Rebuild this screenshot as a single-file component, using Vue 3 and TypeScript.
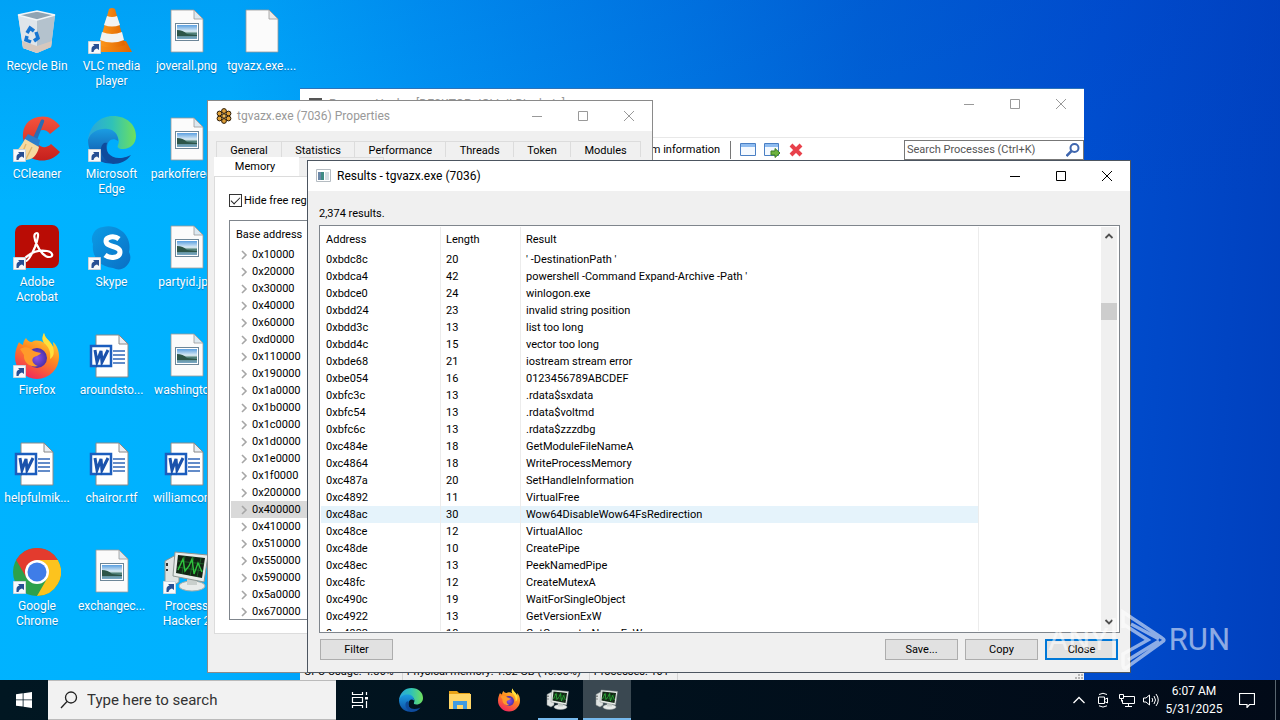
<script setup lang="ts">
import { ref } from 'vue'

interface DesktopItem {
  icon: string
  lines: string[]
  col: number
  row: number
  shortcut?: boolean
}

interface ResultRow {
  address: string
  length: number
  text: string
}

const desktopItems: DesktopItem[] = [
  { icon: 'bin', lines: ['Recycle Bin'], col: 1, row: 1 },
  { icon: 'ccleaner', lines: ['CCleaner'], col: 1, row: 2, shortcut: true },
  { icon: 'acrobat', lines: ['Adobe', 'Acrobat'], col: 1, row: 3, shortcut: true },
  { icon: 'firefox', lines: ['Firefox'], col: 1, row: 4, shortcut: true },
  { icon: 'word', lines: ['helpfulmik...'], col: 1, row: 5 },
  { icon: 'chrome', lines: ['Google', 'Chrome'], col: 1, row: 6, shortcut: true },
  { icon: 'vlc', lines: ['VLC media', 'player'], col: 2, row: 1, shortcut: true },
  { icon: 'edge', lines: ['Microsoft', 'Edge'], col: 2, row: 2, shortcut: true },
  { icon: 'skype', lines: ['Skype'], col: 2, row: 3, shortcut: true },
  { icon: 'word', lines: ['aroundsto...'], col: 2, row: 4 },
  { icon: 'word', lines: ['chairor.rtf'], col: 2, row: 5 },
  { icon: 'image', lines: ['exchangec...'], col: 2, row: 6 },
  { icon: 'image', lines: ['joverall.png'], col: 3, row: 1 },
  { icon: 'image', lines: ['parkoffered...'], col: 3, row: 2 },
  { icon: 'image', lines: ['partyid.jpg'], col: 3, row: 3 },
  { icon: 'image', lines: ['washingto...'], col: 3, row: 4 },
  { icon: 'word', lines: ['williamcon...'], col: 3, row: 5 },
  { icon: 'hacker', lines: ['Process', 'Hacker 2'], col: 3, row: 6, shortcut: true },
  { icon: 'blank', lines: ['tgvazx.exe....'], col: 4, row: 1 },
]

const tabs = ['General', 'Statistics', 'Performance', 'Threads', 'Token', 'Modules']

const baseAddresses = [
  '0x10000', '0x20000', '0x30000', '0x40000', '0x60000', '0xd0000', '0x110000', '0x190000',
  '0x1a0000', '0x1b0000', '0x1c0000', '0x1d0000', '0x1e0000', '0x1f0000', '0x200000',
  '0x400000', '0x410000', '0x510000', '0x550000', '0x590000', '0x5a0000', '0x670000',
]

const results: ResultRow[] = [
  { address: '0xbdc8c', length: 20, text: "' -DestinationPath '" },
  { address: '0xbdca4', length: 42, text: "powershell -Command Expand-Archive -Path '" },
  { address: '0xbdce0', length: 24, text: 'winlogon.exe' },
  { address: '0xbdd24', length: 23, text: 'invalid string position' },
  { address: '0xbdd3c', length: 13, text: 'list too long' },
  { address: '0xbdd4c', length: 15, text: 'vector too long' },
  { address: '0xbde68', length: 21, text: 'iostream stream error' },
  { address: '0xbe054', length: 16, text: '0123456789ABCDEF' },
  { address: '0xbfc3c', length: 13, text: '.rdata$sxdata' },
  { address: '0xbfc54', length: 13, text: '.rdata$voltmd' },
  { address: '0xbfc6c', length: 13, text: '.rdata$zzzdbg' },
  { address: '0xc484e', length: 18, text: 'GetModuleFileNameA' },
  { address: '0xc4864', length: 18, text: 'WriteProcessMemory' },
  { address: '0xc487a', length: 20, text: 'SetHandleInformation' },
  { address: '0xc4892', length: 11, text: 'VirtualFree' },
  { address: '0xc48ac', length: 30, text: 'Wow64DisableWow64FsRedirection' },
  { address: '0xc48ce', length: 12, text: 'VirtualAlloc' },
  { address: '0xc48de', length: 10, text: 'CreatePipe' },
  { address: '0xc48ec', length: 13, text: 'PeekNamedPipe' },
  { address: '0xc48fc', length: 12, text: 'CreateMutexA' },
  { address: '0xc490c', length: 19, text: 'WaitForSingleObject' },
  { address: '0xc4922', length: 13, text: 'GetVersionExW' },
  { address: '0xc4932', length: 18, text: 'GetComputerNameExW' },
]

const hovered = ref('0xc48ac')
const hideFree = ref(true)
const processQuery = ref('')
const startQuery = ref('')
</script>

<template>
  <div class="screen">
    <svg class="defs" width="0" height="0" aria-hidden="true">
      <defs>
        <linearGradient id="g-edge-a" x1="0" y1="0" x2="1" y2="0"><stop offset="0" stop-color="#2aa5dd" /><stop offset=".5" stop-color="#2fc2b8" /><stop offset="1" stop-color="#6fe05c" /></linearGradient>
        <linearGradient id="g-edge-b" x1="0" y1="0" x2="0" y2="1"><stop offset="0" stop-color="#1b9de2" /><stop offset="1" stop-color="#0d4da3" /></linearGradient>
        <linearGradient id="g-fox" x1=".8" y1="0" x2=".3" y2="1"><stop offset="0" stop-color="#ffe03c" /><stop offset=".45" stop-color="#ff8a1f" /><stop offset="1" stop-color="#f2255d" /></linearGradient>
        <radialGradient id="g-globe"><stop offset="0" stop-color="#8a52e8" /><stop offset="1" stop-color="#4b30a8" /></radialGradient>
        <linearGradient id="g-cone" x1="0" y1="0" x2="1" y2="0"><stop offset="0" stop-color="#ff9a1c" /><stop offset="1" stop-color="#e06500" /></linearGradient>
        <linearGradient id="g-cc" x1="0" y1="0" x2="0" y2="1"><stop offset="0" stop-color="#f5533d" /><stop offset="1" stop-color="#c6201d" /></linearGradient>
        <linearGradient id="g-sky" x1="0" y1="0" x2="0" y2="1"><stop offset="0" stop-color="#5a9fe0" /><stop offset=".45" stop-color="#dcecf5" /><stop offset=".6" stop-color="#4f8076" /><stop offset="1" stop-color="#7ba9c8" /></linearGradient>
        <linearGradient id="g-skype" x1="0" y1="0" x2="1" y2="1"><stop offset="0" stop-color="#0b9ce6" /><stop offset="1" stop-color="#0a6fc4" /></linearGradient>
      </defs>
      <symbol id="i-bin" viewBox="0 0 48 48">
        <path d="M5 7 24 3l18 4-4 32-14 6-14-5z" fill="#d4dce2" />
        <path d="m5 7 19 5v33l-14-5z" fill="#dfe5ea" /><path d="m24 12 18-5-4 32-14 6z" fill="#b4c2cd" />
        <path d="m5 7 19-4 18 4-18 5z" fill="#8fa4b3" stroke="#f2f6f8" stroke-width="1.4" />
        <path d="m9 33 15 5 15-5-1 6-14 6-14-5z" fill="#d6c8be" />
        <path d="m14 25 3-5 4 3M23 24l2 6-4 3M18 34l-5-2 1-4" fill="none" stroke="#1676d2" stroke-width="3.500" />
      </symbol>
      <symbol id="i-ccleaner" viewBox="0 0 48 48">
        <path d="M47 10C41 2 33-1 25 1 14 3 9 12 10 22l4 16c5 8 24 10 33-2l-9-8c-4 4-9 4-12 1-5-4-4-11 0-14 4-2 8-1 11 3z" fill="url(#g-cc)" />
        <path d="M28 4c2-1 4 0 3 2l-7 18-4-2z" fill="#2b6db4" /><path d="m15 18 12 6-2 9-15-8z" fill="#2d7dcb" />
        <path d="m12 23 14 8c-2 9-7 13-14 13L1 37c4-3 8-8 11-14z" fill="#f6d9a0" />
        <path d="m13 28-5 12M19 31l-6 12" stroke="#e0b56c" stroke-width="1.4" />
      </symbol>
      <symbol id="i-acrobat" viewBox="0 0 48 48">
        <rect x="2" y="1" width="44" height="43" rx="7" fill="#b90c05" />
        <path d="M24 9c-4 0-3 6 0 12 3 7 8 12 12 12 5 0 4-5-2-6-7-1-14 1-18 4-5 3-6 5-4 6 3 1 7-7 10-14 3-8 4-14 2-14z" fill="none" stroke="#fff" stroke-width="2.2" />
      </symbol>
      <symbol id="i-firefox" viewBox="0 0 48 48">
        <path d="M31 1c-2 4-2 7 0 10-4-3-9-3-12-1-3 0-5-2-6-4-2 2-3 5-3 7-3-1-4-3-4-3-2 4-4 9-4 15a22 22 0 0 0 44 0c0-6-2-12-6-15 0 2 1 4 0 5-2-6-8-8-9-14z" fill="url(#g-fox)" />
        <circle cx="24" cy="26" r="10" fill="url(#g-globe)" />
        <path d="M7 17c5-3 9-2 12 1 3 2 6 2 9 3-2 3-6 3-8 5-2 3 1 7 5 8-8 2-15-4-14-11z" fill="#ff9a2a" />
        <path d="M31 1c-2 4-2 7 0 10 5 4 7 9 6 16 3-2 5-5 3-12-2-6-8-8-9-14z" fill="#ffe03c" />
      </symbol>
      <symbol id="i-word" viewBox="0 0 48 48">
        <path d="M8 3h23l9 9v33H8z" fill="#fff" stroke="#8a8a8a" /><path d="M31 3v9h9z" fill="#e9edf2" stroke="#8a8a8a" />
        <path d="M25 19h12M25 23h12M25 27h12M25 31h12" stroke="#3067b8" stroke-width="1.3" />
        <rect x="3" y="14" width="20" height="20" fill="#fff" stroke="#1b5dbe" stroke-width="2.500" />
        <path d="m7 18 2 12 4-11 1 11 6-12" fill="none" stroke="#1b52ac" stroke-width="3" />
      </symbol>
      <symbol id="i-chrome" viewBox="0 0 48 48">
        <circle cx="24" cy="24" r="24" fill="#2da14c" />
        <path d="M3.200 12A24 24 0 0 1 44.800 12H24L13.600 30z" fill="#e33b2e" />
        <path d="M44.800 12A24 24 0 0 1 24 48L34.400 30 24 12z" fill="#fcc31e" />
        <circle cx="24" cy="24" r="12" fill="#fff" /><circle cx="24" cy="24" r="9.500" fill="#3f7de8" />
      </symbol>
      <symbol id="i-vlc" viewBox="0 0 48 48">
        <path d="M11 33h27l6 11H4z" fill="url(#g-cone)" />
        <path d="M21 1q3-2 6 0l10 36q-13 5-26 0z" fill="url(#g-cone)" />
        <path d="m19 8-3 9q8 3 16 0l-3-9q-5 2-10 0z" fill="#f2f2f2" /><path d="m14 24-2 8q12 5 24 0l-2-8q-10 4-20 0z" fill="#f2f2f2" />
      </symbol>
      <symbol id="i-edge" viewBox="0 0 48 48">
        <path d="M0 24C2 9 12 0 25 0c14 0 23 9 23 20 0 8-6 13-13 13-5 0-6-2-5-4 3-6-2-12-9-12C12 17 3 20 0 24z" fill="url(#g-edge-a)" />
        <path d="M0 24c3-9 12-12 20-11 7 1 11 7 10 12-5-4-11-1-11 7 0 7 4 12 8 15C11 50 0 38 0 24z" fill="url(#g-edge-b)" />
        <path d="M19 27c-3 8 3 15 12 15 6 0 9-2 12-3-4 6-11 9-18 9-8-2-13-10-12-16 1-4 3-6 6-5z" fill="#0f4b9c" />
      </symbol>
      <symbol id="i-skype" viewBox="0 0 48 48">
        <path d="M15 3a21 21 0 0 1 26 25 12 12 0 0 1-16 16A21 21 0 0 1 5 20 12 12 0 0 1 15 3z" fill="url(#g-skype)" />
        <path d="M31 15c-5-4-13-2-13 2 0 7 14 4 14 11 0 6-10 7-15 3" fill="none" stroke="#fff" stroke-width="5" />
      </symbol>
      <symbol id="i-image" viewBox="0 0 48 48">
        <path d="M8 2h23l9 9v33H8z" fill="#fbfbfb" stroke="#9a9a9a" stroke-width=".8" /><path d="M31 2v9h9z" fill="#dce8f0" stroke="#9a9a9a" stroke-width=".8" />
        <rect x="12.500" y="15.500" width="23" height="17" fill="#fff" stroke="#6d8698" /><path d="M14 17h20v14H14z" fill="url(#g-sky)" /><path d="M14 22q6 0 10 4l10 1v1H14z" fill="#2d5548" />
      </symbol>
      <symbol id="i-blank" viewBox="0 0 48 48">
        <path d="M8 2h23l9 9v33H8z" fill="#fbfbfb" stroke="#9a9a9a" stroke-width=".8" /><path d="M31 2v9h9z" fill="#e9e9e9" stroke="#9a9a9a" stroke-width=".8" />
      </symbol>
      <symbol id="i-hacker" viewBox="0 0 48 48">
        <path d="m2 13 9-5 5 3v23l-6 4-8-4z" fill="#dfe3e2" stroke="#8a9390" /><path d="M4 15v3M4 21v2" stroke="#333" stroke-width="2" />
        <ellipse cx="29" cy="38" rx="13" ry="5" fill="#e8ebea" stroke="#a5aeab" /><path d="M24 30h10v7H24z" fill="#c9cfcc" />
        <path d="m12 4 33 3-4 27-31-6z" fill="#e9edeb" stroke="#8d9592" /><path d="m15 7 27 3-3 20-26-5z" fill="#122414" />
        <path d="m15 13 26 3M14 19l26 4M22 8l-3 18M31 9l-4 19M38 10l-4 19" stroke="#1e6e2c" stroke-width=".8" />
        <path d="m15 22 5-11 2 12 4-5 3-7 2 15 4-11 4 9" fill="none" stroke="#2fc43e" stroke-width="1.400" />
      </symbol>
      <symbol id="i-shortcut" viewBox="0 0 14 14">
        <path d="M.5.5h12v12H.5z" fill="#f7f9fb" stroke="#c9d4dc" /><path d="M3.500 11V8q0-3 3-3.500L5 3h6v6L9 7.500Q6 8 5.500 11z" fill="#274f93" />
      </symbol>
      <symbol id="i-min" viewBox="0 0 12 12"><path d="M1 6.500h10" stroke="currentColor" /></symbol>
      <symbol id="i-max" viewBox="0 0 12 12"><path d="M1.500 1.500h9v9h-9z" fill="none" stroke="currentColor" /></symbol>
      <symbol id="i-close" viewBox="0 0 12 12"><path d="m1 1 10 10M11 1 1 11" stroke="currentColor" /></symbol>
      <symbol id="i-chev" viewBox="0 0 8 10"><path d="m2 1 4 4-4 4" fill="none" stroke="#a6a6a6" stroke-width="1.600" /></symbol>
      <symbol id="i-up" viewBox="0 0 10 8"><path d="m1.500 6 3.500-3.500L8.500 6" fill="none" stroke="#505050" stroke-width="1.800" /></symbol>
      <symbol id="i-app" viewBox="0 0 16 16">
        <path d="M.5 1.500h14v12H.5z" fill="#fff" stroke="#b5bcc2" /><path d="M2 4h6v8H2z" fill="#3f8a84" /><path d="M9 4h4v8H9z" fill="#d5dde3" /><path d="M2 4h3v8H2z" fill="#6b87a8" />
      </symbol>
    </svg>

    <main class="desktop">
      <ul class="icons">
        <li v-for="item in desktopItems" :key="item.lines[0]" :style="{ gridColumn: item.col, gridRow: item.row }">
          <span class="pic">
            <svg class="big"><use :href="'#i-' + item.icon" /></svg>
            <svg v-if="item.shortcut" class="arrow"><use href="#i-shortcut" /></svg>
          </span>
          <span v-for="line in item.lines" :key="line" class="label">{{ line }}</span>
        </li>
      </ul>

      <section class="window hacker">
        <header class="titlebar muted">
          <svg class="ticon"><rect x="1" y="2" width="13" height="12" fill="#555" /><rect x="4" y="4" width="9" height="7" fill="#163a1a" /></svg>
          <h2>Process Hacker [DESKTOP-JGLLJLD\admin]</h2>
          <div class="controls">
            <button type="button" aria-label="Minimize"><svg><use href="#i-min" /></svg></button>
            <button type="button" aria-label="Maximize"><svg><use href="#i-max" /></svg></button>
            <button type="button" aria-label="Close"><svg><use href="#i-close" /></svg></button>
          </div>
        </header>
        <div class="toolbar">
          <button type="button" class="sysinfo">System information</button>
          <span class="sep"></span>
          <button type="button" aria-label="Find window">
            <svg viewBox="0 0 16 16"><path d="M.5 1.500h15v12H.5z" fill="#f4f9ff" stroke="#4a7fc4" /><path d="M1 2h14v3H1z" fill="#8fbcf0" /></svg>
          </button>
          <button type="button" aria-label="Find window and thread">
            <svg viewBox="0 0 16 16"><path d="M.5 1.500h14v12H.5z" fill="#f4f9ff" stroke="#4a7fc4" /><path d="M1 2h13v3H1z" fill="#8fbcf0" /><path d="M7 9h4V6.500l5 4.500-5 4.500V13H7z" fill="#6db33f" stroke="#3f7d22" /></svg>
          </button>
          <button type="button" aria-label="Close window">
            <svg viewBox="0 0 16 16"><path d="m3 3 10 10M13 3 3 13" stroke="#e8414b" stroke-width="4" /></svg>
          </button>
          <label class="search">
            <input v-model="processQuery" type="text" placeholder="Search Processes (Ctrl+K)" aria-label="Search Processes" />
            <svg viewBox="0 0 14 14"><circle cx="8.500" cy="5" r="4" fill="none" stroke="#3f66ae" stroke-width="2" /><path d="m5.500 8-5 5" stroke="#3f66ae" stroke-width="2.500" /></svg>
          </label>
        </div>
        <footer class="status">
          <span>CPU Usage: 4.86%</span>
          <span>Physical memory: 1.82 GB (46.08%)</span>
          <span>Processes: 101</span>
          <svg class="grip" viewBox="0 0 10 10"><path d="M7 1h2v2H7zM4 4h2v2H4zM7 4h2v2H7zM1 7h2v2H1zM4 7h2v2H4zM7 7h2v2H7z" fill="#b5b5b5" /></svg>
        </footer>
      </section>

      <section class="window props">
        <header class="titlebar muted">
          <svg class="ticon" viewBox="0 0 16 16">
            <g fill="#e0a038" stroke="#2a1a05"><circle cx="8" cy="3" r="2.400" /><circle cx="12.500" cy="5.500" r="2.400" /><circle cx="12.500" cy="10.500" r="2.400" /><circle cx="8" cy="13" r="2.400" /><circle cx="3.500" cy="10.500" r="2.400" /><circle cx="3.500" cy="5.500" r="2.400" /><circle cx="8" cy="8" r="2.200" fill="#f0bd58" /></g>
          </svg>
          <h2>tgvazx.exe (7036) Properties</h2>
          <div class="controls">
            <button type="button" aria-label="Minimize"><svg><use href="#i-min" /></svg></button>
            <button type="button" aria-label="Maximize"><svg><use href="#i-max" /></svg></button>
            <button type="button" aria-label="Close"><svg><use href="#i-close" /></svg></button>
          </div>
        </header>
        <div class="tabs" role="tablist">
          <button v-for="tab in tabs" :key="tab" type="button" role="tab">{{ tab }}</button>
        </div>
        <div class="tabs second">
          <button type="button" role="tab" class="current" aria-selected="true">Memory</button>
          <button type="button" role="tab" aria-label="Environment"></button>
        </div>
        <div class="page">
          <label class="check"><input v-model="hideFree" type="checkbox" /><span>Hide free regions</span></label>
          <div class="tree">
            <div class="tree-head">Base address</div>
            <ul>
              <li v-for="addr in baseAddresses" :key="addr" :class="{ picked: addr === '0x400000' }">
                <svg><use href="#i-chev" /></svg>{{ addr }}
              </li>
            </ul>
          </div>
        </div>
      </section>

      <section class="window results">
        <header class="titlebar">
          <svg class="ticon"><use href="#i-app" /></svg>
          <h2>Results - tgvazx.exe (7036)</h2>
          <div class="controls">
            <button type="button" aria-label="Minimize"><svg><use href="#i-min" /></svg></button>
            <button type="button" aria-label="Maximize"><svg><use href="#i-max" /></svg></button>
            <button type="button" aria-label="Close"><svg><use href="#i-close" /></svg></button>
          </div>
        </header>
        <div class="content">
          <p>2,374 results.</p>
          <div class="list">
            <div class="scroller">
              <table>
                <colgroup><col class="c1" /><col class="c2" /><col class="c3" /></colgroup>
                <thead>
                  <tr><th>Address</th><th>Length</th><th>Result</th></tr>
                </thead>
                <tbody>
                  <tr v-for="row in results" :key="row.address" :class="{ hot: hovered === row.address }" @mouseenter="hovered = row.address">
                    <td>{{ row.address }}</td><td>{{ row.length }}</td><td>{{ row.text }}</td>
                  </tr>
                </tbody>
              </table>
              <div class="gridlines"><i class="c1"></i><i class="c2"></i><i class="c3"></i></div>
            </div>
            <div class="bar">
              <svg><use href="#i-up" /></svg>
              <span class="thumb"></span>
              <svg class="down"><use href="#i-up" /></svg>
            </div>
          </div>
          <div class="actions">
            <button type="button" class="filter">Filter</button>
            <button type="button">Save...</button>
            <button type="button">Copy</button>
            <button type="button" class="default">Close</button>
          </div>
        </div>
      </section>

      <div class="mark">
        <span>ANY</span>
        <svg viewBox="0 0 56 64"><path d="M3 10v40M12 20V4l39 26q4 2 0 4L15 60q-3 1-3-3V46l25-14L12 16M17 52l31-19M20 16l28 15" fill="none" stroke="currentColor" stroke-width="3.500" /></svg>
        <span>RUN</span>
      </div>
    </main>

    <footer class="taskbar">
      <button type="button" class="start" aria-label="Start">
        <svg viewBox="0 0 16 16"><path d="m0 2.200 6.700-.9v6.200H0zM7.500 1.200 16 0v7.500H7.500zM0 8.300h6.700v6.300L0 13.700zM7.500 8.300H16V16l-8.500-1.200z" fill="#fff" /></svg>
      </button>
      <label class="find">
        <svg viewBox="0 0 18 18"><circle cx="11" cy="6.500" r="5.500" fill="none" stroke="#222" stroke-width="1.300" /><path d="m7 10.500-6 6.500" stroke="#222" stroke-width="1.300" /></svg>
        <input v-model="startQuery" type="text" placeholder="Type here to search" aria-label="Type here to search" />
      </label>
      <button type="button" class="app" aria-label="Task View">
        <svg class="s18" viewBox="0 0 18 18"><path d="M1.500 1v2.500h10V1M1.500 17v-2.500h10V17M1.500 6.500h10v5h-10zM15.500 1v3M15.500 10v7" fill="none" stroke="#fff" stroke-width="1.200" /><path d="M14 6h3v2.500h-3z" fill="#fff" /></svg>
      </button>
      <span class="pinned">
        <button type="button" class="app" aria-label="Microsoft Edge"><svg class="s24"><use href="#i-edge" /></svg></button>
        <button type="button" class="app" aria-label="File Explorer">
          <svg class="s24" viewBox="0 0 24 24"><path d="M1 3h8l2 2h11v4H1z" fill="#e8a317" /><path d="M1 6h22v15H1z" fill="#ffd667" /><path d="M5 21v-8h14v8h-4v-4H9v4z" fill="#3f9be0" /></svg>
        </button>
        <button type="button" class="app" aria-label="Firefox"><svg class="s24"><use href="#i-firefox" /></svg></button>
      </span>
      <button type="button" class="app running" aria-label="Process Hacker"><svg class="s24"><use href="#i-hacker" /></svg></button>
      <button type="button" class="app running active" aria-label="Results"><svg class="s24"><use href="#i-hacker" /></svg></button>
      <div class="tray">
        <button type="button" aria-label="Show hidden icons"><svg viewBox="0 0 16 16"><path d="m2.500 11 5.500-5.500 5.500 5.500" fill="none" stroke="#fff" stroke-width="1.300" /></svg></button>
        <button type="button" aria-label="Meet Now"><svg viewBox="0 0 16 16"><path d="M3.500 5h6v6.500h-6zM9.500 7.500l3-1.500v5l-3-1.500M4 2.500q4-2.500 8 0M4 13.800q4 2.500 8 0" fill="none" stroke="#fff" /></svg></button>
        <button type="button" aria-label="Network"><svg viewBox="0 0 16 16"><path d="M5 4.500h10.500v7H3.500V8M9.500 11.500v3M6 14.500h7M.5 2.500h4v4h-4zM2.500 6.500v3" fill="none" stroke="#fff" /></svg></button>
        <button type="button" aria-label="Volume"><svg viewBox="0 0 16 16"><path d="M.5 6v4H3l3.500 3V3L3 6zM9 6q1.500 2 0 4M11 4q3 4 0 8M13 2q4.500 6 0 12" fill="none" stroke="#fff" /></svg></button>
        <time datetime="2025-05-31T06:07"><span>6:07 AM</span><span>5/31/2025</span></time>
        <button type="button" class="notify" aria-label="Notifications"><svg viewBox="0 0 16 16"><path d="M.5 1.500h15v11h-5l-2.500 3v-3H.5z" fill="none" stroke="#fff" stroke-width="1.200" /></svg></button>
        <span class="peek"></span>
      </div>
    </footer>
  </div>
</template>

<style>
html,
body,
#app {
  height: 100%;
}
body {
  margin: 0;
  overflow: hidden;
}
</style>

<style scoped>
* {
  box-sizing: border-box;
}
.screen {
  display: flex;
  flex-direction: column;
  height: 100%;
  font: 11px/17px Roboto, "Noto Sans", sans-serif;
  color: #000;
}
.defs {
  position: absolute;
}
button {
  font: inherit;
  color: inherit;
  border: 0;
  background: none;
  padding: 0;
}
ul,
h2,
p {
  margin: 0;
  padding: 0;
  list-style: none;
  font-weight: normal;
}
.desktop {
  position: relative;
  flex: 1;
  min-height: 0;
  overflow: hidden;
  background:
    linear-gradient(180deg, rgba(0, 60, 190, 0.14), transparent 30%),
    linear-gradient(93deg, #00b3ff 0%, #00b1ff 18%, #0096f5 33%, #0079e4 52%, #0062d6 66%, #004ecf 84%, #003fbd 100%);
}
.icons {
  display: grid;
  grid-template-columns: 74px 75px 75px 75px;
  grid-auto-rows: 108px;
}
.icons li {
  display: flex;
  flex-direction: column;
  align-items: center;
  padding-top: 8px;
}
.pic {
  position: relative;
  width: 48px;
  height: 48px;
  margin-bottom: 3px;
}
.big {
  width: 48px;
  height: 48px;
}
.arrow {
  position: absolute;
  left: 0;
  bottom: 1px;
  width: 14px;
  height: 14px;
}
.label {
  font-size: 12px;
  line-height: 15px;
  white-space: nowrap;
  color: #fff;
  text-shadow: 0 1px 1px rgba(0, 40, 90, 0.4);
}
.window {
  position: absolute;
  display: flex;
  flex-direction: column;
  border: 1px solid #8a8a8a;
  background: #f0f0f0;
}
.hacker {
  left: 300px;
  right: 196px;
  top: 88px;
  bottom: 0;
  border-width: 1px 0 0;
  border-color: #2d73b8;
}
.props {
  left: 207px;
  top: 100px;
  width: 446px;
  bottom: 7px;
}
.results {
  left: 307px;
  right: 149px;
  top: 160px;
  bottom: 7px;
  border-color: #4c5560;
}
.titlebar {
  display: flex;
  align-items: center;
  flex: none;
  height: 30px;
  padding-left: 8px;
  background: #fff;
}
.titlebar h2 {
  flex: 1;
  margin-left: 5px;
  font-size: 12px;
}
.muted {
  color: #999;
}
.ticon {
  width: 16px;
  height: 16px;
}
.controls {
  display: flex;
}
.controls button {
  width: 46px;
  height: 30px;
}
.controls svg {
  width: 12px;
  height: 12px;
  display: block;
  margin: auto;
}
.toolbar {
  display: flex;
  align-items: center;
  height: 42px;
  padding: 20px 0 0 320px;
  border-bottom: 1px solid #ddd;
  background: linear-gradient(#fff 18px, #e8e8e8 18px, #e8e8e8 19px, #fff 19px);
}
.toolbar button {
  width: 16px;
  height: 16px;
  margin-right: 8px;
}
.toolbar button svg {
  display: block;
  width: 16px;
  height: 16px;
}
.toolbar .sysinfo {
  width: 100px;
  height: auto;
  margin: 0;
  text-align: right;
}
.sep {
  width: 1px;
  height: 18px;
  margin: 0 9px 0 10px;
  background: #777;
}
.search {
  display: flex;
  align-items: center;
  width: 180px;
  height: 20px;
  margin-left: auto;
  padding: 0 3px 0 2px;
  border: 1px solid #777;
  background: #fff;
}
.search input {
  flex: 1;
  min-width: 0;
  padding: 0;
  border: 0;
  outline: 0;
  background: none;
  font: inherit;
}
.search input::placeholder {
  color: #555;
  opacity: 1;
}
.search svg {
  width: 14px;
  height: 14px;
}
.status {
  display: flex;
  height: 18px;
  margin-top: auto;
  background: #f0f0f0;
}
.status span {
  padding: 1px 8px 0 4px;
  border-right: 1px solid #d5d5d5;
}
.grip {
  width: 10px;
  height: 10px;
  margin: auto 0 0 auto;
}
.tabs {
  display: flex;
  height: 16px;
  margin: 10px 11px 0 8px;
}
.tabs button {
  flex: 1 1 auto;
  border: 1px solid #dcdcdc;
  border-width: 1px 1px 0 0;
  line-height: 17px;
}
.tabs button:first-child {
  border-left-width: 1px;
}
.second {
  height: 19px;
  margin: 0 11px 0 6px;
}
.second button {
  flex: 0 0 85px;
  line-height: 18px;
}
.second .current {
  padding-right: 3px;
  border-color: #fff;
  background: #fff;
}
.page {
  flex: 1;
  display: flex;
  flex-direction: column;
  min-height: 0;
  margin: 0 7px 38px 6px;
  padding: 15px 14px 13px;
  border: 1px solid #dcdcdc;
  background: #fff;
}
.check {
  display: flex;
  align-items: center;
  gap: 2px;
  margin-bottom: 11px;
}
.check input {
  appearance: none;
  width: 13px;
  height: 13px;
  margin: 0;
  border: 1px solid #333;
  background: #fff;
}
.check input:checked::before {
  content: "";
  display: block;
  width: 8px;
  height: 4px;
  margin: 2px 1px;
  border: solid #222;
  border-width: 0 0 1px 1px;
  rotate: -45deg;
}
.tree {
  flex: 1;
  min-height: 0;
  overflow: hidden;
  padding: 1px;
  border: 1px solid #7f858c;
}
.tree-head {
  padding: 1px 0 0 5px;
  line-height: 23px;
}
.tree li {
  display: flex;
  align-items: center;
  gap: 4px;
  height: 17px;
  padding: 1px 0 0 9px;
  line-height: 16px;
}
.tree svg {
  width: 8px;
  height: 10px;
}
.picked {
  background: #d9d9d9;
}
.content {
  flex: 1;
  display: flex;
  flex-direction: column;
  min-height: 0;
  padding: 14px 10px 12px 11px;
}
.content p {
  margin-bottom: 3px;
}
.list {
  flex: 1;
  display: flex;
  min-height: 0;
  padding: 1px;
  border: 1px solid #7f858c;
  background: #fff;
}
.scroller {
  position: relative;
  flex: 1;
  overflow: hidden;
}
table {
  width: 658px;
  table-layout: fixed;
  border-collapse: collapse;
}
.c1 {
  width: 120px;
}
.c2 {
  width: 80px;
}
.c3 {
  width: 458px;
}
th,
td {
  height: 17px;
  padding: 1px 5px 0;
  line-height: 16px;
  font-weight: normal;
  text-align: left;
  white-space: nowrap;
}
th {
  height: 24px;
}
.hot {
  background: #e5f3fb;
}
.gridlines {
  position: absolute;
  inset: 0;
  display: flex;
}
.gridlines i {
  flex: none;
  border-right: 1px solid #ececec;
}
.bar {
  display: flex;
  flex-direction: column;
  align-items: center;
  width: 17px;
  padding: 5px 1px 5px 0;
  background: linear-gradient(90deg, #f0f0f0 16px, #fff 16px);
}
.bar svg {
  width: 10px;
  height: 8px;
}
.thumb {
  width: 16px;
  height: 17px;
  margin-top: 63px;
  background: #cdcdcd;
}
.down {
  margin-top: auto;
  rotate: 180deg;
}
.actions {
  display: flex;
  gap: 7px;
  margin: 6px 2px 0 1px;
}
.actions button {
  width: 73px;
  height: 21px;
  border: 1px solid #adadad;
  background: #e1e1e1;
}
.actions .filter {
  margin-right: auto;
}
.actions .default {
  border: 2px solid #0078d7;
}
.mark {
  position: absolute;
  right: 50px;
  bottom: 8px;
  display: flex;
  align-items: center;
  gap: 2px;
  font: 31px/64px Roboto, sans-serif;
  color: #fff;
  opacity: 0.55;
  pointer-events: none;
}
.mark svg {
  width: 56px;
  height: 64px;
}
.taskbar {
  display: flex;
  flex: none;
  height: 40px;
  background: linear-gradient(90deg, #011722, #01111d 50%, #020a18);
  color: #fff;
}
.start {
  width: 48px;
}
.start svg {
  width: 16px;
  height: 16px;
  display: block;
  margin: auto;
}
.find {
  display: flex;
  align-items: center;
  width: 288px;
  padding-left: 12px;
  gap: 9px;
  border: 1px solid #bbb;
  border-width: 1px 0;
  background: #f2f2f2;
}
.find svg {
  width: 18px;
  height: 18px;
}
.find input {
  flex: 1;
  min-width: 0;
  padding: 0;
  border: 0;
  outline: 0;
  background: none;
  font: 15px/20px Roboto, sans-serif;
}
.find input::placeholder {
  color: #333;
  opacity: 1;
}
.app {
  width: 48px;
  height: 40px;
}
.app svg {
  display: block;
  margin: auto;
}
.s18 {
  width: 18px;
  height: 18px;
}
.s24 {
  width: 24px;
  height: 24px;
}
.pinned {
  display: flex;
  gap: 1px;
  margin: 0 5px 0 3px;
}
.running {
  width: 40px;
  margin-right: 5px;
  border-bottom: 2px solid #76b9ed;
  padding-top: 2px;
}
.active {
  width: 48px;
  background: #3a4851;
}
.tray {
  display: flex;
  align-items: center;
  margin-left: auto;
}
.tray button {
  width: 24px;
  height: 40px;
}
.tray svg {
  display: block;
  width: 16px;
  height: 16px;
  margin: auto;
}
.tray time {
  display: flex;
  flex-direction: column;
  width: 62px;
  text-align: center;
  font-size: 12px;
  line-height: 18px;
}
.tray .notify {
  width: 44px;
}
.peek {
  width: 5px;
  height: 40px;
  margin-left: 6px;
  border-left: 1px solid #5a6670;
}
</style>
